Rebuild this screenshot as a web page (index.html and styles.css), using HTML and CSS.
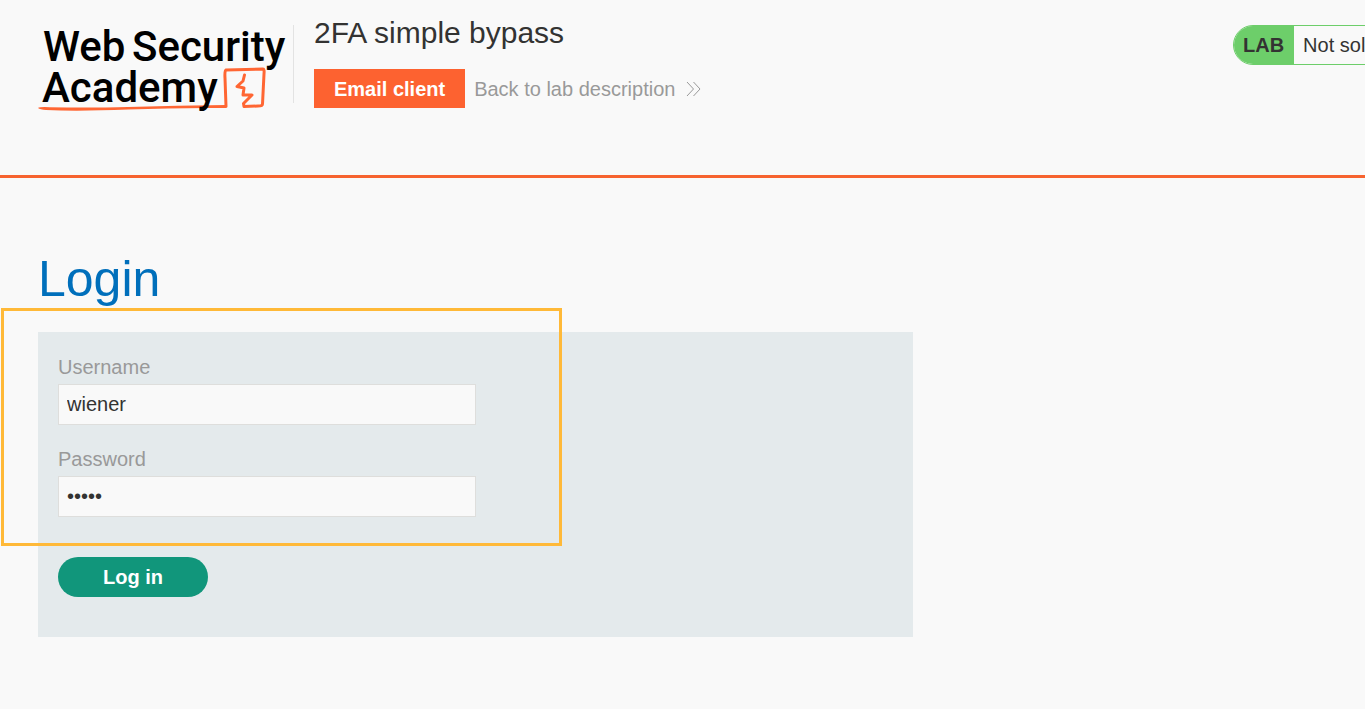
FILE: index.html
```html
<!DOCTYPE html>
<html lang="en">
<head>
<meta charset="utf-8">
<title>2FA simple bypass</title>
<link rel="stylesheet" href="styles.css">
</head>
<body>
<header class="lab-header">
  <a class="logo" href="#" aria-label="Web Security Academy">
    <svg width="255" height="92" viewBox="0 0 255 92">
      <path fill="#ff6633" d="M0 88Q2 86.500 12 87.200Q50 88 90 87Q140 85.500 188 85V88Q140 87.500 90 89.500Q40 91.500 8 90Q2 89.500 0 88Z"/>
      <path fill="none" stroke="#ff6633" stroke-width="3" stroke-linejoin="round" stroke-linecap="round" d="M188 86.500L187 58Q186.500 50.500 188 50L225 49Q226.500 49 226 54L224.500 84Q224.500 86 220 86L206 86.500L205.500 83.500L214 75H205L206 68L199 66.500L205 61L206.500 55"/>
      <g class="logo-text">
        <text x="5" y="41">Web</text>
        <text x="94" y="41">Security</text>
        <text x="4" y="82">Academy</text>
      </g>
    </svg>
  </a>
  <div class="title-block">
    <h2 class="title">2FA simple bypass</h2>
    <div class="links">
      <a class="email-link" href="#">Email client</a>
      <a class="back-link" href="#">Back to lab description
        <svg width="15" height="16" viewBox="0 0 15 16" fill="none" stroke="#999" stroke-width="1"><path d="M1 1L7.500 8L1 15M7.500 1L14 8L7.500 15"/></svg>
      </a>
    </div>
  </div>
  <div class="status">
    <div class="pill"><strong class="pill-tag">LAB</strong><span class="pill-text">Not solved</span></div>
  </div>
</header>
<main class="content">
  <h1 class="heading">Login</h1>
  <form class="login-form">
    <div class="field">
      <label for="username">Username</label>
      <input id="username" type="text" value="wiener">
    </div>
    <div class="field">
      <label for="password">Password</label>
      <input id="password" type="password" value="peter">
    </div>
    <button class="submit" type="button">Log in</button>
    <div class="highlight"></div>
  </form>
</main>
</body>
</html>
```
FILE: styles.css
```css
* { box-sizing: border-box; }

body {
  margin: 0;
  background: #f9f9f9;
  color: #333332;
  font: 20px/24px "Liberation Sans", Arial, sans-serif;
}

.lab-header {
  display: flex;
  align-items: flex-start;
  min-height: 178px;
  padding: 20px 0 0 38px;
  border-bottom: 3px solid #f7632f;
  overflow: hidden;
}

.logo { display: block; flex: none; }
.logo svg { display: block; overflow: visible; }
.logo-text {
  font: 500 42px Roboto, sans-serif;
  fill: #000;
}

.title-block {
  flex: 1;
  margin-top: 5px;
  padding-left: 20px;
  border-left: 1px solid #e3e3e3;
  height: 78px;
}
.title {
  margin: 0;
  font-size: 30px;
  line-height: 16px;
  font-weight: 400;
}
.links { display: flex; align-items: center; gap: 9px; margin-top: 28px; }
.links a { text-decoration: none; }
.email-link {
  padding: 8px 20px 7px;
  background: #fd6230;
  color: #fff;
  font-weight: 700;
}
.back-link { display: flex; align-items: center; gap: 11px; color: #999; }

.status { flex: none; width: 132px; margin-top: 5px; }
.pill {
  display: flex;
  width: max-content;
  height: 40px;
  border: 1px solid #6dce6a;
  border-radius: 20px;
  overflow: hidden;
  line-height: 38px;
}
.pill-tag { padding: 0 10px 0 9px; background: #6dce6a; }
.pill-text { padding: 0 50px 0 9px; }

.content { padding: 72px 38px; }
.heading {
  margin: 0 0 24px;
  color: #006fbb;
  font-size: 50px;
  line-height: 58px;
  font-weight: 400;
}

.login-form {
  position: relative;
  max-width: 875px;
  padding: 20px 20px 40px;
  background: #e4eaec;
}
.field { display: grid; gap: 2px; max-width: 418px; margin-bottom: 19px; }
.field label { color: #999; line-height: 30px; }
.field input {
  width: 100%;
  height: 41px;
  padding: 0 8px;
  border: 1px solid #dededc;
  background: #f9f9f9;
  color: #333332;
  font: inherit;
}
.submit {
  display: block;
  width: 150px;
  height: 40px;
  margin-top: 40px;
  border: 0;
  border-radius: 20px;
  background: #11967b;
  color: #fff;
  font: inherit;
  font-weight: 700;
}

/* Annotation frame drawn over the credentials */
.highlight {
  position: absolute;
  top: -24px;
  left: -37px;
  width: 561px;
  height: 238px;
  border: 3px solid #ffb938;
  pointer-events: none;
}
```
